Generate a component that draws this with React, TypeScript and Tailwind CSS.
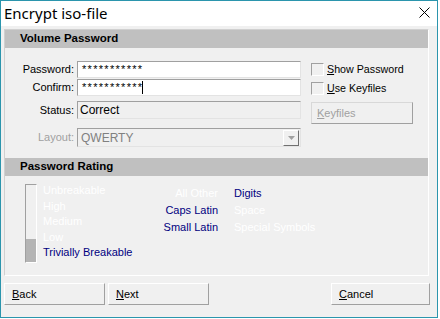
import React from 'react';

const font = { fontFamily: '"Liberation Sans", Arial, sans-serif' };

function Header({ title }: { title: string }) {
  return (
    <div className="h-[18px] bg-[#c0c0c0] flex items-center pl-[15px] text-[11.5px] font-bold text-black">
      {title}
    </div>
  );
}

function Field({ label, children, disabled }: { label: string; children: React.ReactNode; disabled?: boolean }) {
  return (
    <div className="flex items-center">
      <div className={`w-[72px] text-right pr-[3px] ${disabled ? 'text-[#a0a0a0]' : 'text-black'}`}>{label}</div>
      {children}
    </div>
  );
}

function Check({ label }: { label: string }) {
  return (
    <div className="flex items-center h-[13px]">
      <div className="w-[13px] h-[13px] border border-[#a0a0a0] border-r-white border-b-white" />
      <span className="ml-[3px] text-[10.7px]">
        <u>{label[0]}</u>
        {label.slice(1)}
      </span>
    </div>
  );
}

function Btn({ label, className }: { label: string; className?: string }) {
  return (
    <div className={`h-[22px] bg-[#f0f0f0] border border-white border-r-[#a0a0a0] border-b-[#a0a0a0] flex items-center pl-[7px] text-black ${className ?? ''}`}>
      <span>
        <u>{label[0]}</u>
        {label.slice(1)}
      </span>
    </div>
  );
}

const levels = ['Unbreakable', 'High', 'Medium', 'Low', 'Trivially Breakable'];

export default function App() {
  return (
    <div className="w-[440px] h-[319px] bg-white text-[11px]" style={font}>
      <div className="w-[438px] h-[318px] border border-[#2b95ad] flex flex-col">
        <div className="h-[25px] bg-white flex items-center justify-between pl-[3px] pr-[7px]">
          <span className="text-[15px] text-black leading-none mt-[-1px]" style={{ fontFamily: '"Noto Sans", "Open Sans", sans-serif' }}>
            Encrypt iso-file
          </span>
          <svg width="11" height="11" viewBox="0 0 11 11" className="mb-[2px]">
            <path d="M0.5 0.5 L10.5 10.5 M10.5 0.5 L0.5 10.5" stroke="#000" strokeWidth="1" />
          </svg>
        </div>
        <div className="flex-1 bg-[#f0f0f0] pl-[3px] pr-[8px] pt-[3px] flex flex-col">
          <div className="h-[247px] border border-[#d0d0d0] border-r-white border-b-white flex flex-col">
            <Header title="Volume Password" />
            <div className="flex pt-[13px] h-[110px]">
              <div className="flex flex-col w-[301px]">
                <Field label="Password:">
                  <div className="w-[224px] h-[17px] bg-white border border-[#a0a0a0] border-r-[#e3e3e3] border-b-[#e3e3e3] pl-[4px] flex items-center tracking-[1.3px] text-[11px]">
                    ***********
                  </div>
                </Field>
                <div className="mt-[1px]">
                  <Field label="Confirm:">
                    <div className="w-[224px] h-[17px] bg-white border border-[#a0a0a0] border-r-[#e3e3e3] border-b-[#e3e3e3] pl-[4px] flex items-center tracking-[1.3px]">
                      ***********
                      <span className="inline-block w-[1px] h-[13px] bg-black ml-[-1px]" />
                    </div>
                  </Field>
                </div>
                <div className="mt-[5px]">
                  <Field label="Status:">
                    <div className="w-[224px] h-[18px] bg-[#f0f0f0] border border-[#a0a0a0] border-r-[#e3e3e3] border-b-[#e3e3e3] pl-[2px] flex items-center text-[12px]">
                      Correct
                    </div>
                  </Field>
                </div>
                <div className="mt-[9px]">
                  <Field label="Layout:" disabled>
                    <div className="w-[224px] h-[19px] bg-[#f0f0f0] border border-[#a0a0a0] border-r-[#e3e3e3] border-b-[#e3e3e3] pl-[3px] flex items-center justify-between text-[#808080] text-[12px]">
                      <span>QWERTY</span>
                      <div className="w-[16px] h-[16px] border border-white border-r-[#707070] border-b-[#707070] flex items-center justify-center mr-[1px]">
                        <svg width="7" height="4" viewBox="0 0 7 4">
                          <path d="M0 0 H7 L3.5 4 Z" fill="#a0a0a0" />
                        </svg>
                      </div>
                    </div>
                  </Field>
                </div>
              </div>
              <div className="flex flex-col pl-[5px] pt-[2px]">
                <Check label="Show Password" />
                <div className="mt-[6px]">
                  <Check label="Use Keyfiles" />
                </div>
                <div className="mt-[7px] w-[102px] h-[22px] border border-[#d8d8d8] border-r-[#a0a0a0] border-b-[#a0a0a0] flex items-center pl-[5px] text-[#a0a0a0]">
                  <span>
                    <u>K</u>eyfiles
                  </span>
                </div>
              </div>
            </div>
            <Header title="Password Rating" />
            <div className="flex pt-[8px] pl-[20px]">
              <div className="w-[12px] h-[79px] border border-[#a0a0a0] border-r-white border-b-white flex flex-col justify-end">
                <div className="h-[23px] bg-[#b4b4b4]" />
              </div>
              <div className="flex flex-col pl-[6px] leading-[15.7px] mt-[-1px] w-[131px] whitespace-nowrap">
                {levels.map((l, i) => (
                  <div key={l} className={`${i === 4 ? 'text-[#000080]' : 'text-white'} ${i === 4 ? 'mt-[-1px]' : ''}`}>
                    {l}
                  </div>
                ))}
              </div>
              <div className="flex pt-[1px] leading-[17px] whitespace-nowrap">
                <div className="flex flex-col items-end w-[50px]">
                  <div className="text-white">All Other</div>
                  <div className="text-[#000080]">Caps Latin</div>
                  <div className="text-[#000080]">Small Latin</div>
                </div>
                <div className="flex flex-col pl-[16px]">
                  <div className="text-[#000080]">Digits</div>
                  <div className="text-white">Space</div>
                  <div className="text-white">Special Symbols</div>
                </div>
              </div>
            </div>
          </div>
          <div className="flex mt-[7px]">
            <Btn label="Back" className="w-[101px]" />
            <Btn label="Next" className="w-[101px] ml-[3px]" />
            <div className="flex-1" />
            <Btn label="Cancel" className="w-[99px] mr-[-1px]" />
          </div>
        </div>
      </div>
    </div>
  );
}
